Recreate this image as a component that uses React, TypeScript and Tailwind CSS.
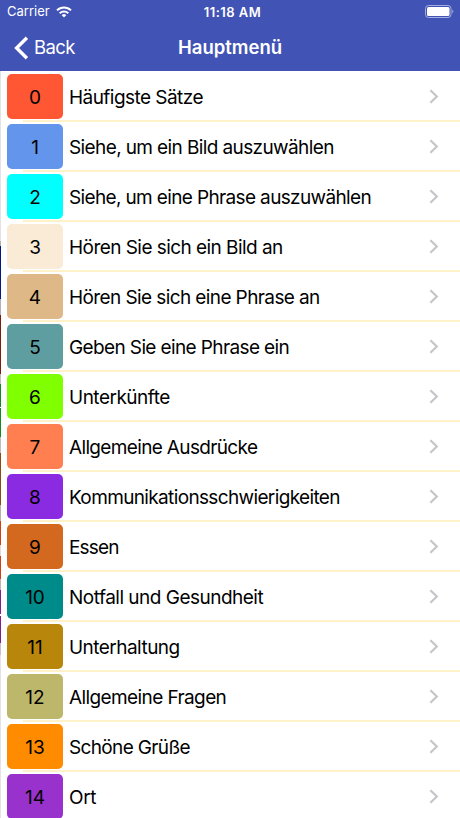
const items = [
  { title: "Häufigste Sätze", color: "bg-[#ff5733]", track: "tracking-[-0.55px]" },
  { title: "Siehe, um ein Bild auszuwählen", color: "bg-[#6495ed]", track: "tracking-[-0.61px]" },
  { title: "Siehe, um eine Phrase auszuwählen", color: "bg-[#00ffff]", track: "tracking-[-0.64px]" },
  { title: "Hören Sie sich ein Bild an", color: "bg-[#faebd7]", track: "tracking-[-0.55px]" },
  { title: "Hören Sie sich eine Phrase an", color: "bg-[#deb887]", track: "tracking-[-0.6px]" },
  { title: "Geben Sie eine Phrase ein", color: "bg-[#5f9ea0]", track: "tracking-[-0.62px]" },
  { title: "Unterkünfte", color: "bg-[#7fff00]", track: "tracking-[-0.5px]" },
  { title: "Allgemeine Ausdrücke", color: "bg-[#ff7f50]", track: "tracking-[-0.65px]" },
  { title: "Kommunikationsschwierigkeiten", color: "bg-[#8a2be2]", track: "tracking-[-0.64px]" },
  { title: "Essen", color: "bg-[#d2691e]", track: "tracking-[-0.8px]" },
  { title: "Notfall und Gesundheit", color: "bg-[#008b8b]", track: "tracking-[-0.51px]" },
  { title: "Unterhaltung", color: "bg-[#b8860b]", track: "tracking-[-0.53px]" },
  { title: "Allgemeine Fragen", color: "bg-[#bdb76b]", track: "tracking-[-0.6px]" },
  { title: "Schöne Grüße", color: "bg-[#ff8c00]", track: "tracking-[-0.65px]" },
  { title: "Ort", color: "bg-[#9932cc]", track: "tracking-[-0.4px]" },
];

// slice of the previous screen that stays visible on the left
const strips = [
  "h-[170px] bg-[#e2e2e8]",
  "h-[5px] bg-[#b5b0a8]",
  "h-[53px] bg-[#001a80]",
  "h-[16px] bg-[#b5b0b8]",
  "h-[59px] bg-[#7a1f0c]",
  "h-[10px] bg-[#c4bcbc]",
  "h-[23px] bg-[#128a1c]",
  "h-[1px] bg-white",
  "h-[29px] bg-[#128a1c]",
  "h-[16px] bg-[#c0bcc0]",
  "h-[52px] bg-[#8a4b12]",
  "h-[16px] bg-[#b8b0ac]",
  "h-[24px] bg-[#d04010]",
  "h-[11px] bg-[#e6d8d8]",
  "h-[23px] bg-[#d04010]",
  "h-[11px] bg-[#c0b4b0]",
  "h-[24px] bg-[#80208c]",
  "h-[2px] bg-white",
  "h-[27px] bg-[#80208c]",
  "h-[12px] bg-[#c8c0c8]",
  "grow bg-[#e2e2e8]",
];

const StatusBar = () => {
  return (
    <div className="h-6 flex flex-row justify-between items-center pl-[7px] pr-[6px] text-[13px]">
      <div className="w-40 flex items-center gap-[6px]">
        <span>Carrier</span>
        <svg width="16" height="12" viewBox="0 0 16 12" fill="none" stroke="white" strokeWidth="2">
          <path d="M1 4.4a10 10 0 0 1 14 0" />
          <path d="M3.7 7.2a6.1 6.1 0 0 1 8.6 0" />
          <path d="M8 11.6 5.7 9.2a3.3 3.3 0 0 1 4.6 0z" fill="white" stroke="none" />
        </svg>
      </div>
      <span className="pl-[4px] pt-px font-semibold tracking-[0.45px] whitespace-nowrap">11:18 AM</span>
      <div className="w-40 flex justify-end pb-px">
        <svg width="29" height="13" viewBox="0 0 29 13">
          <rect x="0.5" y="0.5" width="25.5" height="12" rx="3" fill="none" stroke="#a5aee0" />
          <rect x="2" y="2" width="22.5" height="9" rx="1.5" fill="white" />
          <path d="M27.3 4.5c1.4.6 1.4 3.4 0 4z" fill="#a5aee0" />
        </svg>
      </div>
    </div>
  );
};

const Header = () => {
  return (
    <div className="h-[71px] shrink-0 bg-[#4153b5] text-white">
      <StatusBar />
      <div className="h-[47px] flex flex-row items-center pl-[14px] pr-[10px]">
        <div className="w-[120px] flex items-center gap-[5px]">
          <svg width="15" height="24" viewBox="0 0 15 24" fill="none" stroke="white" strokeWidth="3.4">
            <path d="M12.9 1.8 2.6 12l10.3 10.2" />
          </svg>
          <span className="text-[18.5px] tracking-[-0.6px]">Back</span>
        </div>
        <h1 className="w-[192px] text-center text-[18.5px] font-semibold">Hauptmenü</h1>
      </div>
    </div>
  );
};

const App = () => {
  return (
    <div className="h-[818px] w-full flex flex-col overflow-hidden bg-white font-['Inter',sans-serif]">
      <Header />
      <div className="flex flex-row grow min-h-0">
        <div className="w-px shrink-0 flex flex-col">
          {strips.map((s, i) => (
            <div key={i} className={`shrink-0 ${s}`} />
          ))}
        </div>
        <div className="grow">
          {items.map((item, i) => (
            <div key={i} className="h-[50px] flex flex-col">
              <div className="h-[49px] shrink-0 pt-[2px] flex flex-row items-center pl-[6px] pr-[21px]">
                <div className={`w-[56px] h-[45px] pt-[3px] rounded-[5px] flex justify-center items-center text-[19px] text-black ${item.color}`}>
                  {i}
                </div>
                <p className={`grow pl-[6px] pt-[3px] text-[19px] text-black whitespace-nowrap ${item.track}`}>{item.title}</p>
                <svg width="10" height="15" viewBox="0 0 10 15" fill="none" stroke="#c6c6ca" strokeWidth="2.2">
                  <path d="M1.4 1.2 7.8 7.5 1.4 13.8" />
                </svg>
              </div>
              <div className="h-[2px] shrink-0 ml-[22px] bg-[#fff1c8]" />
            </div>
          ))}
        </div>
      </div>
    </div>
  );
};

export default App;
